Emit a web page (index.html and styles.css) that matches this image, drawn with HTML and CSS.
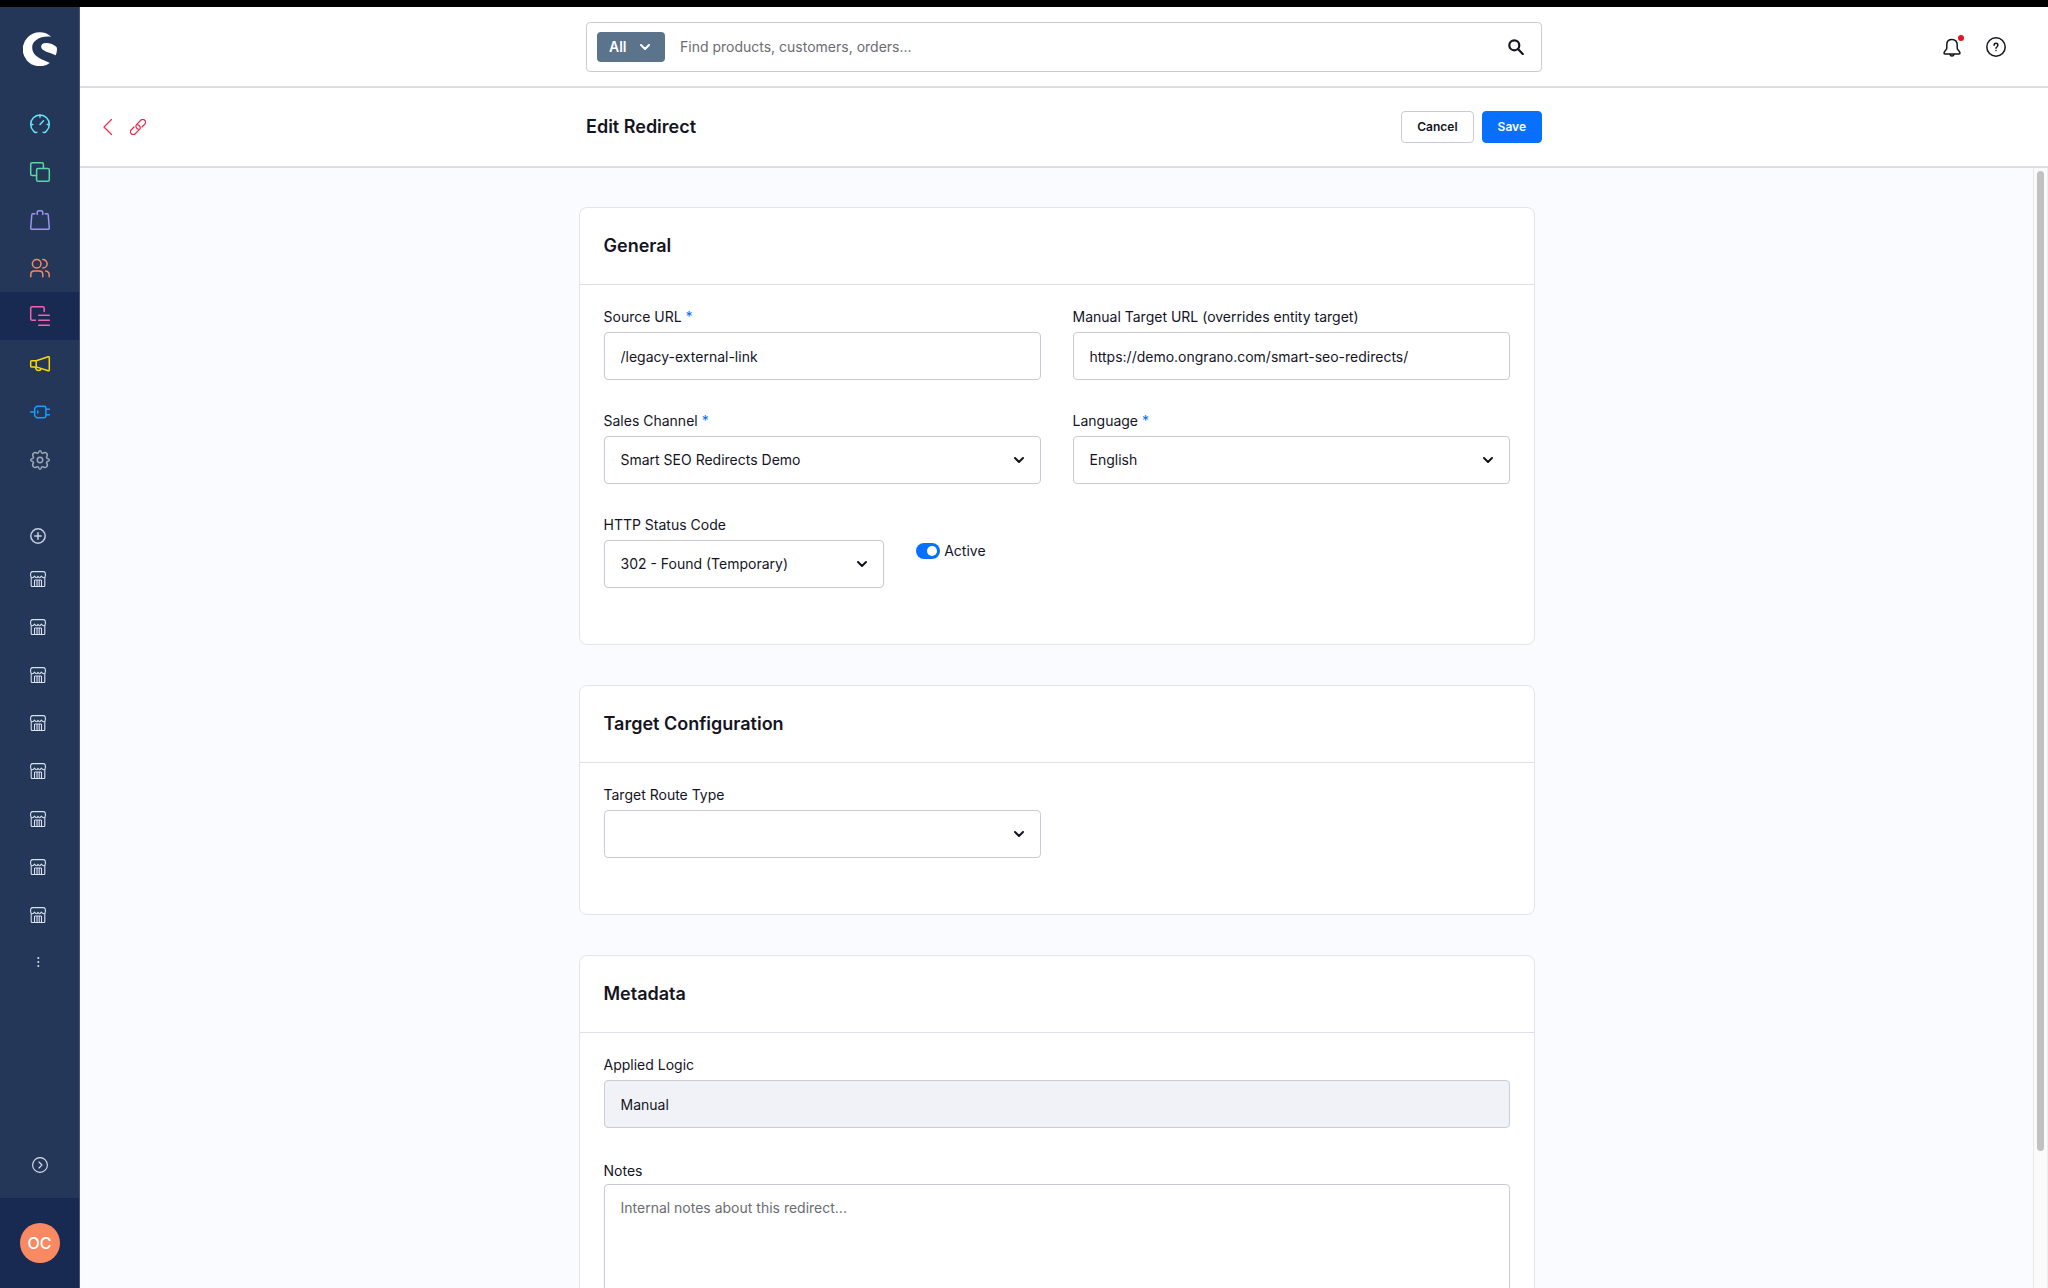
FILE: index.html
```html
<!DOCTYPE html>
<html lang="en">
<head>
    <meta charset="UTF-8">
    <meta name="viewport" content="width=device-width, initial-scale=1.0">
    <title>Edit Redirect</title>
    <link rel="stylesheet" href="styles.css">
</head>
<body>
    <!-- Shared icons -->
    <svg class="sprite" aria-hidden="true">
        <symbol id="chevron" viewBox="0 0 16 16">
            <path d="M4 6l4 4 4-4" fill="none" stroke="currentColor" stroke-width="2" stroke-linecap="round" stroke-linejoin="round"/>
        </symbol>
        <symbol id="shop" viewBox="0 0 16 16">
            <g fill="none" stroke="currentColor" stroke-width="1.1" stroke-linejoin="round" stroke-linecap="round">
                <path d="M2.5 .6h11q1.5 0 1.9 2v2.2q0 1.8-1.8 1.9-1.4 0-2.2-1.6-.9 1.6-1.9 1.6-.9 0-1.5-1.4-.6 1.4-1.5 1.4-1 0-1.9-1.6-.8 1.6-2.200 1.600Q.6 6.600.6 4.800V2.600Q1 .6 2.500.6z"/>
                <path d="M1.200 6.500v8.100q0 .9.9.9h11.800q.9 0 .9-.9V6.500M4.500 15.300V9.700q0-.7.7-.7h5.600q.7 0 .7.7v5.600M7 9.200v6M9.200 9.200v6"/>
            </g>
        </symbol>
    </svg>

    <div class="app">
        <aside class="sidebar">
            <a href="#" class="logo" aria-label="Shopware">
                <svg width="34" height="34" viewBox="0 0 34 34">
                    <path d="M28.200 4.700A17 17 0 1 0 26.800 30.900C23 28.500 9.200 26.200 9.200 15.300 9.200 8.600 17.500 3.400 28.200 4.700z" fill="#fff"/>
                    <path d="M32.800 23.300C33.900 20.500 34.200 18 33.800 15.400 32.500 13.300 28 10.900 23 10.900 19.500 10.900 17.800 12.800 18.200 15.200 18.900 19.300 26.500 20.200 32.800 23.300z" fill="#fff"/>
                </svg>
            </a>

            <nav class="main-nav" aria-label="Main">
                <a href="#" class="nav-item dashboard" aria-label="Dashboard">
                    <svg class="icon" viewBox="0 0 20 20"><path d="M6.800 18.300Q5 19.200 3.500 17A9.300 9.300 0 1 1 16.500 17Q15 19.200 13.200 18.300M10 .8v2.500M.8 10.500h2M17.200 10.500h2M10 10.500l3.500-3.700"/></svg>
                </a>
                <a href="#" class="nav-item catalogue" aria-label="Catalogues">
                    <svg class="icon" viewBox="0 0 20 20"><rect x="6.600" y="6.600" width="12.700" height="12.700" rx="1.500"/><path d="M6.500 13.400H2.200Q.7 13.400.7 11.900V2.200Q.7.700 2.200.7h9.700q1.500 0 1.500 1.500v4.300"/></svg>
                </a>
                <a href="#" class="nav-item orders" aria-label="Orders">
                    <svg class="icon" viewBox="0 0 20 20"><path d="M4.800 3.700H2.900q-1 0-1.100 1L.7 17.700q-.1 1.600 1.500 1.600h15.600q1.600 0 1.500-1.600L18.200 4.700q-.1-1-1.100-1h-1.900M7.200 4.600V2.600Q7.200.7 9 .7h2q1.800 0 1.800 1.900v2"/></svg>
                </a>
                <a href="#" class="nav-item customers" aria-label="Customers">
                    <svg class="icon" viewBox="0 0 20 20"><circle cx="6.700" cy="5.700" r="4.300"/><path d="M.8 18.700v-2.200q0-3.500 3.500-3.500h5q3.500 0 3.500 3.500v2.200M12.800 1.400a4.300 4.300 0 0 1 0 8.600M15.600 13.100q3.600.4 3.600 3.900v1.700"/></svg>
                </a>
                <a href="#" class="nav-item content active" aria-label="Content">
                    <svg class="icon" viewBox="0 0 20 20"><path d="M5.500 14.200H2.200Q.7 14.200.7 12.700V2.200Q.7.700 2.200.7h10.500q1.500 0 1.500 1.500v3.300M8.700 9.200h10.600M8.700 14.200h10.600M8.700 19.200h10.600"/></svg>
                </a>
                <a href="#" class="nav-item marketing" aria-label="Marketing">
                    <svg class="icon" viewBox="0 0 20 20"><path d="M.7 7.700q0-.9.9-.9h4.600L18.200 2.800q1.100-.3 1.100.8v12.300q0 1.200-1.100.9L6.200 12.900H1.600q-.9 0-.9-.9zM6.200 6.800v6.100M5.700 13v1.200q.5 2.400 3 2.400 2 0 2.300-1.900"/></svg>
                </a>
                <a href="#" class="nav-item extensions" aria-label="Extensions">
                    <svg class="icon" viewBox="0 0 20 20"><path d="M.6 10h4.200M16 7.200h3.400M16 12.800h3.400M7.800 9v2M6.700 4.300h7.600q1.600 0 1.600 1.600v8.200q0 1.600-1.600 1.600H6.700L4.700 13.700V6.300z"/></svg>
                </a>
                <a href="#" class="nav-item settings" aria-label="Settings">
                    <svg class="icon" viewBox="0 0 20 20"><path d="M10 .7Q11.300.7 11.500 2.800L12.500 3.300Q15.400 1.700 16.600 3.400 18 4.700 16.500 7.300L17.200 8.500Q19.300 8.700 19.300 10T17.200 11.500L16.500 12.700Q18.300 15.300 16.600 16.600 15.300 18.300 12.500 16.700L11.500 17.200Q11.300 19.300 10 19.300T8.500 17.200L7.500 16.700Q4.700 18.300 3.400 16.600 1.700 15.300 3.500 12.700L2.800 11.500Q.7 11.300.7 10T2.800 8.500L3.500 7.300Q2 4.700 3.400 3.400 4.700 1.700 7.500 3.300L8.500 2.800Q8.700.7 10 .7z"/><circle cx="10" cy="10" r="2.700"/></svg>
                </a>
            </nav>

            <nav class="channel-nav" aria-label="Sales channels">
                <button class="channel-add" aria-label="Add sales channel">
                    <svg class="icon-small" viewBox="0 0 16 16"><g fill="none" stroke="currentColor" stroke-width="1.500" stroke-linecap="round"><circle cx="8" cy="8" r="7.200"/><path d="M8 4.800v6.400M4.800 8h6.400"/></g></svg>
                </button>
                <a href="#" class="channel-item" aria-label="Sales channel 1"><svg class="icon-small"><use href="#shop"/></svg></a>
                <a href="#" class="channel-item" aria-label="Sales channel 2"><svg class="icon-small"><use href="#shop"/></svg></a>
                <a href="#" class="channel-item" aria-label="Sales channel 3"><svg class="icon-small"><use href="#shop"/></svg></a>
                <a href="#" class="channel-item" aria-label="Sales channel 4"><svg class="icon-small"><use href="#shop"/></svg></a>
                <a href="#" class="channel-item" aria-label="Sales channel 5"><svg class="icon-small"><use href="#shop"/></svg></a>
                <a href="#" class="channel-item" aria-label="Sales channel 6"><svg class="icon-small"><use href="#shop"/></svg></a>
                <a href="#" class="channel-item" aria-label="Sales channel 7"><svg class="icon-small"><use href="#shop"/></svg></a>
                <a href="#" class="channel-item" aria-label="Sales channel 8"><svg class="icon-small"><use href="#shop"/></svg></a>
                <button class="channel-item" aria-label="More sales channels">
                    <svg class="icon-small" viewBox="0 0 16 16"><g fill="currentColor"><circle cx="8.300" cy="3" r="1"/><circle cx="8.300" cy="7" r="1"/><circle cx="8.300" cy="11" r="1"/></g></svg>
                </button>
            </nav>

            <button class="expand-btn" aria-label="Expand menu">
                <svg class="icon-small" viewBox="0 0 16 16"><g fill="none" stroke="currentColor" stroke-width="1.100" stroke-linecap="round" stroke-linejoin="round"><circle cx="8" cy="8" r="7.400"/><path d="M7 5l3 3-3 3"/></g></svg>
            </button>
            <div class="user-area">
                <button class="avatar">OC</button>
            </div>
        </aside>

        <div class="page">
            <header class="topbar">
                <form class="search" role="search">
                    <button type="button" class="search-type">All <svg class="icon-small"><use href="#chevron"/></svg></button>
                    <input type="search" class="search-input" placeholder="Find products, customers, orders..." aria-label="Search">
                    <button type="button" class="search-btn" aria-label="Search">
                        <svg class="icon-small" viewBox="0 0 16 16"><g fill="none" stroke="currentColor" stroke-width="2.200" stroke-linecap="round"><circle cx="6.300" cy="6.300" r="5"/><path d="M10.200 10.200l4.600 4.700"/></g></svg>
                    </button>
                </form>
                <div class="top-actions">
                    <button class="top-btn" aria-label="Notifications">
                        <svg class="icon" viewBox="0 0 20 20"><path d="M10 2.400c-3.200 0-5.200 2.200-5.200 5.200v3.600c0 1.600-2.800 3.200-2.800 4.800 0 .6.4.9.900.9h14.200c.5 0 .9-.3.900-.9 0-1.600-2.800-3.200-2.800-4.800V7.600c0-3-2-5.200-5.200-5.200zM8 17.100q.2 1.900 2 1.900t2-1.900"/></svg>
                        <span class="dot"></span>
                    </button>
                    <button class="top-btn" aria-label="Help">
                        <svg class="icon" viewBox="0 0 20 20"><circle cx="10" cy="10" r="9.200"/><path d="M8.100 8.200q0-1.900 1.900-1.900t1.900 1.800q0 1.100-1 1.700-.9.500-.9 1.500M10 13.400v.2"/></svg>
                    </button>
                </div>
            </header>

            <div class="page-head">
                <div class="head-links">
                    <a href="#" aria-label="Back"><svg width="16" height="16" viewBox="0 0 16 16"><path d="M11.500.5L4 8l7.500 7.500"/></svg></a>
                    <a href="#" aria-label="Redirects"><svg width="16" height="16" viewBox="0 0 16 16"><path transform="rotate(-45 8 8)" d="M10.800 10.800h3.900a2.800 2.800 0 0 0 0-5.600H9a2.800 2.800 0 0 0-2.800 2.800q0 1 .5 1.600M5.200 5.200H1.300a2.800 2.800 0 0 0 0 5.600H7a2.800 2.800 0 0 0 2.800-2.800q0-1-.5-1.600"/></svg></a>
                </div>
                <div class="head-main">
                    <h1>Edit Redirect</h1>
                    <button class="btn">Cancel</button>
                    <button class="btn btn-primary">Save</button>
                </div>
            </div>

            <div class="page-body">
                <main class="content-area">
                    <section class="card">
                        <h2 class="card-title">General</h2>
                        <div class="card-body">
                            <div class="row two">
                                <div class="field">
                                    <label for="source">Source URL <span class="required">*</span></label>
                                    <input type="text" id="source" value="/legacy-external-link">
                                </div>
                                <div class="field">
                                    <label for="target">Manual Target URL (overrides entity target)</label>
                                    <input type="text" id="target" value="https://demo.ongrano.com/smart-seo-redirects/">
                                </div>
                            </div>
                            <div class="row two">
                                <div class="field">
                                    <label for="channel">Sales Channel <span class="required">*</span></label>
                                    <div class="select">
                                        <select id="channel"><option>Smart SEO Redirects Demo</option></select>
                                        <svg class="icon-small"><use href="#chevron"/></svg>
                                    </div>
                                </div>
                                <div class="field">
                                    <label for="language">Language <span class="required">*</span></label>
                                    <div class="select">
                                        <select id="language"><option>English</option></select>
                                        <svg class="icon-small"><use href="#chevron"/></svg>
                                    </div>
                                </div>
                            </div>
                            <div class="row three">
                                <div class="field">
                                    <label for="status">HTTP Status Code</label>
                                    <div class="select">
                                        <select id="status"><option>302 - Found (Temporary)</option></select>
                                        <svg class="icon-small"><use href="#chevron"/></svg>
                                    </div>
                                </div>
                                <div class="switch-field">
                                    <input type="checkbox" class="switch" id="active" checked>
                                    <label for="active">Active</label>
                                </div>
                            </div>
                        </div>
                    </section>

                    <section class="card">
                        <h2 class="card-title">Target Configuration</h2>
                        <div class="card-body">
                            <div class="row two">
                                <div class="field">
                                    <label for="route">Target Route Type</label>
                                    <div class="select">
                                        <select id="route"><option></option></select>
                                        <svg class="icon-small"><use href="#chevron"/></svg>
                                    </div>
                                </div>
                            </div>
                        </div>
                    </section>

                    <section class="card">
                        <h2 class="card-title">Metadata</h2>
                        <div class="card-body">
                            <div class="row">
                                <div class="field">
                                    <label for="logic">Applied Logic</label>
                                    <input type="text" id="logic" value="Manual" disabled>
                                </div>
                            </div>
                            <div class="field notes">
                                <label for="notes">Notes</label>
                                <textarea id="notes" placeholder="Internal notes about this redirect..."></textarea>
                            </div>
                        </div>
                    </section>
                </main>
                <div class="scrollbar" aria-hidden="true"><div class="scroll-thumb"></div></div>
            </div>
        </div>
    </div>
</body>
</html>
```
FILE: styles.css
```css
* {
    box-sizing: border-box;
}
body {
    margin: 0;
    font-family: Inter, "Liberation Sans", sans-serif;
    font-size: 14px;
    line-height: 16px;
    color: #14141f;
    background: #fafbff;
}
button, input, select, textarea {
    font: inherit;
    color: inherit;
    margin: 0;
}
button {
    padding: 0;
    border: none;
    background: none;
    cursor: pointer;
}
.sprite {
    display: none;
}
svg {
    display: block;
}
.icon {
    width: 20px;
    height: 20px;
    fill: none;
    stroke: currentColor;
    stroke-width: 1.5;
    stroke-linecap: round;
    stroke-linejoin: round;
    overflow: visible;
}
.icon-small {
    width: 16px;
    height: 16px;
}
.app {
    display: flex;
    height: 100vh;
    border-top: 7px solid #000;
}

/* Sidebar */
.sidebar {
    width: 80px;
    flex: none;
    display: flex;
    flex-direction: column;
    background: #243758;
    border-right: 1px solid #42557a;
}
.logo {
    padding: 25px 0 34px 23px;
}
.nav-item {
    display: flex;
    align-items: center;
    padding-left: 30px;
    height: 48px;
}
.nav-item.active {
    background: #182a52;
}
.dashboard { color: #65e5fb; }
.catalogue { color: #57d9a3; }
.orders { color: #a092f0; }
.customers { color: #f88962; }
.content { color: #f364af; }
.marketing { color: #ffd700; }
.extensions { color: #189eff; }
.settings { color: #9aa8b5; }
.channel-nav {
    padding-top: 33px;
}
.channel-add, .channel-item {
    display: flex;
    align-items: center;
    width: 100%;
    padding-left: 30px;
    height: 48px;
    color: #d9e2f0;
}
.channel-add {
    height: 38px;
    color: #c3d0e2;
}
.expand-btn {
    margin: auto auto 25px 32px;
    color: #d9e2f0;
}
.user-area {
    display: flex;
    align-items: center;
    justify-content: center;
    height: 90px;
    background: #182a52;
}
.avatar {
    width: 40px;
    height: 40px;
    border-radius: 50%;
    background: #f88962;
    color: #fff;
    font-size: 16px;
    font-weight: 500;
}

/* Top bar */
.page {
    flex: 1;
    min-width: 0;
    display: flex;
    flex-direction: column;
}
.topbar, .page-head {
    display: grid;
    grid-template-columns: 1fr minmax(0, 956px) 1fr;
    align-items: center;
    flex: none;
    height: 80px;
    background: #fff;
    border-bottom: 2px solid #dcdde3;
}
.topbar {
    height: 81px;
}
.search {
    grid-column: 2;
    display: flex;
    align-items: center;
    height: 50px;
    padding: 0 17px 0 10px;
    border: 1px solid #c9cbd6;
    border-radius: 4px;
}
.search-type {
    display: flex;
    align-items: center;
    justify-content: space-between;
    width: 68px;
    height: 30px;
    padding: 0 12px;
    border-radius: 4px;
    background: #5b738b;
    color: #fff;
    font-weight: 600;
}
.search-input {
    flex: 1;
    padding: 0 15px;
    border: none;
    outline: none;
    background: none;
}
::placeholder {
    color: #6b6c72;
    opacity: 1;
}
.top-actions {
    display: flex;
    justify-content: flex-end;
    gap: 24px;
    padding-right: 42px;
}
.top-btn {
    position: relative;
}
.dot {
    position: absolute;
    top: -2px;
    right: -2px;
    width: 6px;
    height: 6px;
    border-radius: 50%;
    background: #e3151f;
}

/* Page header */
.head-links {
    display: flex;
    gap: 14px;
    padding-left: 20px;
}
.head-links svg {
    fill: none;
    stroke: #f3284a;
    stroke-width: 1.2;
    stroke-linecap: round;
    stroke-linejoin: round;
}
.head-main {
    display: flex;
    align-items: center;
    gap: 8px;
}
h1, h2 {
    margin: 0;
    font-size: 18px;
    font-weight: 600;
    line-height: 24px;
}
h1 {
    flex: 1;
}
.btn {
    height: 32px;
    padding: 0 15px;
    border: 1px solid #c9cbd6;
    border-radius: 4px;
    background: #fff;
    font-size: 12px;
    font-weight: 600;
}
.btn-primary {
    border-color: #0870ff;
    background: #0870ff;
    color: #fff;
}

/* Cards */
.page-body {
    flex: 1;
    min-height: 0;
    display: flex;
}
.content-area {
    flex: 1;
    overflow-y: auto;
    scrollbar-width: none;
    padding: 39px 24px;
}
.scrollbar {
    width: 15px;
    padding: 3px;
    background: #fafafa;
    border-left: 1px solid #e8e8e8;
    border-right: 1px solid #ededed;
}
.scroll-thumb {
    height: 88%;
    border-radius: 4px;
    background: #c1c1c1;
}
.card {
    max-width: 956px;
    margin: 0 auto 40px;
    background: #fff;
    border: 1px solid #e3e4ea;
    border-radius: 8px;
}
.card-title {
    padding: 26px 24px;
    border-bottom: 1px solid #e0e1e8;
}
.card-body {
    padding: 24px 24px 23px;
}
.row {
    display: grid;
    gap: 32px;
    margin-bottom: 33px;
}
.two {
    grid-template-columns: 1fr 1fr;
}
.three {
    grid-template-columns: 1fr 1fr 1fr;
}
.field label {
    display: block;
    margin-bottom: 7px;
}
.required {
    color: #0870ff;
}
.field input, .field select, .field textarea {
    display: block;
    width: 100%;
    height: 48px;
    padding: 0 16px;
    border: 1px solid #c9cbd6;
    border-radius: 4px;
    background: #fff;
    outline: none;
}
.field input:disabled {
    background: #f0f2f8;
}
.select {
    display: grid;
    align-items: center;
}
.select select, .select svg {
    grid-area: 1 / 1;
}
.field select {
    appearance: none;
}
.select svg {
    justify-self: end;
    margin-right: 14px;
    pointer-events: none;
}
.switch-field {
    display: flex;
    align-items: center;
    align-self: start;
    gap: 4px;
    padding-top: 26px;
}
.switch {
    appearance: none;
    display: flex;
    align-items: center;
    justify-content: flex-end;
    width: 24px;
    height: 16px;
    padding: 0 3px;
    border-radius: 8px;
    background: #0870ff;
}
.switch::before {
    content: "";
    width: 10px;
    height: 10px;
    border-radius: 50%;
    background: #fff;
}
.field.notes label {
    margin-bottom: 3px;
    line-height: 20px;
}
.field textarea {
    height: 132px;
    padding: 15px 16px;
    resize: vertical;
}
```
